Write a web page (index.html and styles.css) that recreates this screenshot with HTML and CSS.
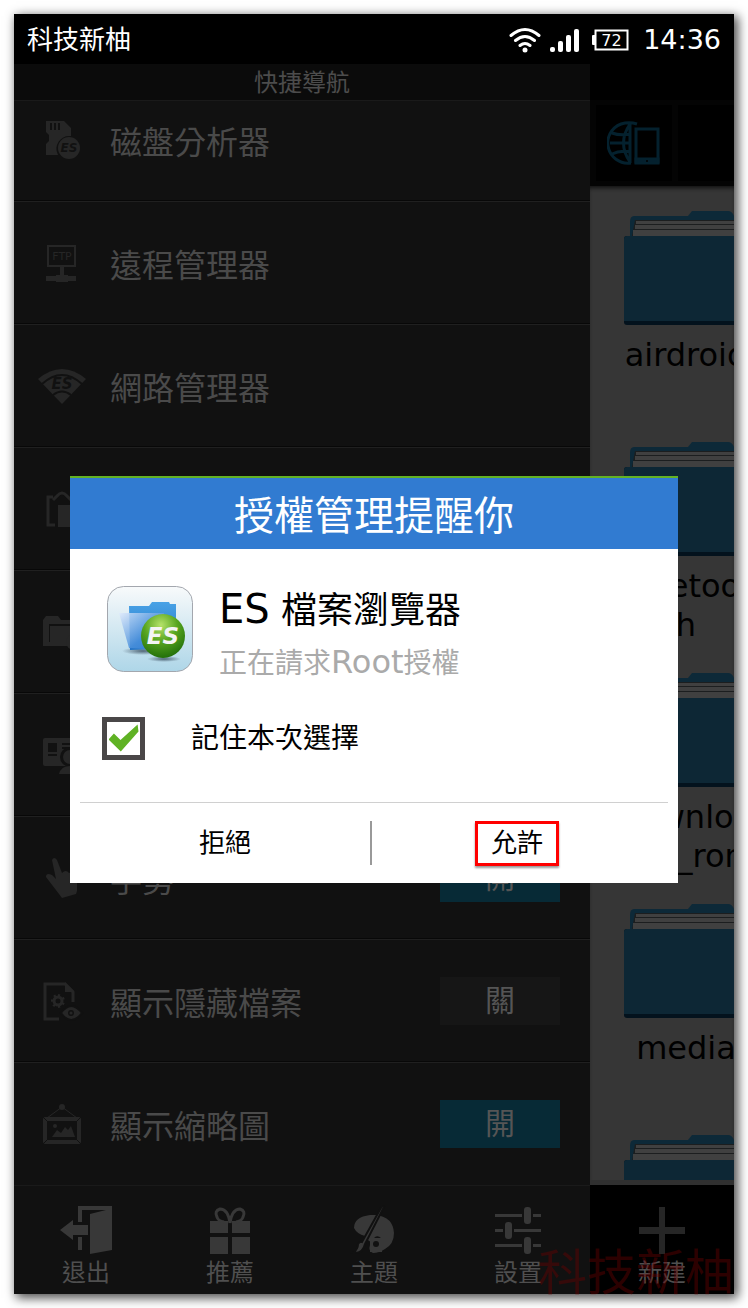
FILE: index.html
```html
<!DOCTYPE html>
<html lang="zh-Hant">
<head>
  <meta charset="UTF-8">
  <meta name="viewport" content="width=device-width, initial-scale=1">
  <title>ES 檔案瀏覽器</title>
  <link rel="stylesheet" href="styles.css">
</head>
<body>

  <!-- folder drawing shared by every grid item -->
  <svg class="defs" width="0" height="0">
    <symbol id="folder" viewBox="0 0 124 126">
      <path fill="#0d2938" d="M6 12q0-6 4-6h54l4-5h36q4 0 6 5h8q4 0 4 6v40H6z"/>
      <path fill="#1c1e1f" d="M11 10h113v16H8z"/>
      <path fill="#404040" d="M12 11h112v3H12zM11 15h113v4H11zM9 20h115v6H9z"/>
      <path fill="#03121d" d="M0 29q0-3 3-3h118q3 0 3 3v83q0 3-3 3H3q-3 0-3-3z"/>
      <path fill="#0d2735" d="M0 29q0-3 3-3h118q3 0 3 3v82H0z"/>
    </symbol>
  </svg>

  <main class="phone">
    <header class="status">
      <span class="carrier">科技新柚</span>
      <svg class="wifi" width="32" height="26" viewBox="0 0 32 26" fill="none" stroke="#fff" stroke-width="3" stroke-linecap="round">
        <path d="M2 8.500Q16-3.500 30 8.500M6.500 13.500Q16 5.500 25.500 13.500M11 18.500Q16 14.500 21 18.500"/>
        <circle cx="16" cy="23" r="2.500" fill="#fff" stroke="none"/>
      </svg>
      <svg class="signal" width="30" height="24" viewBox="0 0 30 24" fill="#fff">
        <rect x="0" y="19" width="5" height="5" rx="2"/>
        <rect x="8" y="13" width="5" height="11" rx="2"/>
        <rect x="16" y="7" width="5" height="17" rx="2"/>
        <rect x="24" y="1" width="5" height="23" rx="2"/>
      </svg>
      <svg class="battery" width="37" height="22" viewBox="0 0 37 22">
        <rect x="3.500" y="1.500" width="32" height="19" fill="none" stroke="#fff" stroke-width="2"/>
        <rect x="0" y="6" width="4" height="10" rx="1" fill="#fff"/>
        <text x="19.500" y="17" fill="#fff" font-size="16" text-anchor="middle">72</text>
      </svg>
      <time class="clock">14:36</time>
    </header>

    <div class="screen">
      <nav class="drawer">
        <h2 class="drawer-title">快捷導航</h2>
        <ul class="menu">
          <li class="row">
            <svg class="row-icon" viewBox="0 0 48 48">
              <path d="M8 5h18l7 7v8a13 13 0 0 0-13 19H8V28l3-3v-6l-3-3z"/>
              <path class="cut" d="M12 7h2v7h-2zM16 7h2v7h-2zM20 7h2v7h-2z"/>
              <circle cx="31" cy="32" r="11"/>
              <text class="cut" x="31" y="36" font-size="12" font-weight="bold" font-style="italic" text-anchor="middle">ES</text>
            </svg>
            <span class="row-label">磁盤分析器</span>
          </li>
          <li class="row">
            <svg class="row-icon" viewBox="0 0 48 48">
              <path fill-rule="evenodd" d="M9 6h29v22H9zM11 8v18h25V8z"/>
              <path d="M22 28h4v9h12v5H8v-5h14z"/>
              <path d="M18 36h12v7H18z"/>
              <text x="24" y="21" font-size="11" text-anchor="middle">FTP</text>
            </svg>
            <span class="row-label">遠程管理器</span>
          </li>
          <li class="row">
            <svg class="row-icon" viewBox="0 0 48 48">
              <path d="M0 17Q24-3 48 17L24 42z"/>
              <path class="cut-line" d="M4 22Q24 4 44 22M15 33q9-7 18 0"/>
              <text class="cut" x="24" y="27" font-size="15" font-weight="bold" font-style="italic" text-anchor="middle">ES</text>
            </svg>
            <span class="row-label">網路管理器</span>
          </li>
          <li class="row">
            <svg class="row-icon" viewBox="0 0 48 48">
              <path class="line" d="M17 40h-7V12h5M33 12h5v8"/>
              <path class="line" d="M15 15l4-4q5-6 10 0l4 4"/>
              <path d="M20 20h12l8 8v14H20z"/>
            </svg>
          </li>
          <li class="row">
            <svg class="row-icon" viewBox="0 0 48 48">
              <path d="M5 12l3-4h12l3 4h18v4H11v18H5z"/>
              <path d="M12 18h28v10l-10 10H5v-4h7z"/>
              <circle cx="36" cy="34" r="8"/>
            </svg>
          </li>
          <li class="row">
            <svg class="row-icon" viewBox="0 0 48 48">
              <path d="M7 7h33q2 0 2 2v24q0 2-2 2H7q-2 0-2-2V9q0-2 2-2z"/>
              <path class="cut" d="M10 12h9v9h-9zM10 23h9v2h-9zM24 12h14v2H24zM24 16h10v2H24z"/>
              <circle class="cut" cx="32" cy="26" r="10"/>
              <circle cx="32" cy="26" r="7"/>
              <path d="M21 43q2-8 11-8t11 8z"/>
            </svg>
          </li>
          <li class="row">
            <svg class="row-icon" viewBox="0 0 48 48">
              <path d="M14 6q2-4 5 0l5 13q4-4 7 0 4-2 6 2l2 3v13l-1 3-14 4-3-4-13-17q0-5 6-2l4 4z"/>
            </svg>
            <span class="row-label">手勢</span>
            <button class="toggle on" type="button">開</button>
          </li>
          <li class="row">
            <svg class="row-icon" viewBox="0 0 48 48">
              <path class="line" d="M21 42H7V7h20l8 8v10"/>
              <path d="M27 5l9 9v1h-9z"/>
              <circle class="line" cx="20" cy="24" r="4"/>
              <path class="line" stroke-dasharray="2 3" d="M20 18.500a5.500 5.500 0 1 1-.1 0"/>
              <path class="halo" d="M23 36q10-14 21 0-11 14-21 0z"/>
              <circle class="cut" cx="33" cy="36" r="3"/>
              <circle cx="33" cy="36" r="1.500"/>
            </svg>
            <span class="row-label">顯示隱藏檔案</span>
            <button class="toggle" type="button">關</button>
          </li>
          <li class="row">
            <svg class="row-icon" viewBox="0 0 48 48">
              <circle cx="24" cy="7" r="3"/>
              <path fill="none" stroke="#262626" stroke-width="1" d="M24 7L9 18M24 7l15 11"/>
              <path fill-rule="evenodd" d="M7 17h34q2 0 2 2v23q0 2-2 2H7q-2 0-2-2V19q0-2 2-2zM9 21v19h30V21z"/>
              <path d="M14 37l5-7 4 3 4-6 3 3 3-4 4 11z"/>
              <circle cx="17" cy="26" r="2"/>
              <path stroke="#111" d="M5 17l4 4M43 17l-4 4M5 44l4-4M43 44l-4-4"/>
            </svg>
            <span class="row-label">顯示縮略圖</span>
            <button class="toggle on" type="button">開</button>
          </li>
        </ul>
        <div class="actions">
          <button class="action" type="button">
            <svg class="action-icon" viewBox="0 0 52 50">
              <path d="M18 1h34v44l-22 4V9l16-4H22v12h-4zM18 32h4v13h-4zM0 25l13-10v5h15v10H13v5z"/>
            </svg>
            退出
          </button>
          <button class="action" type="button">
            <svg class="action-icon" viewBox="0 0 52 50">
              <path d="M6 16h18v12H6zM28 16h18v12H28zM6 32h18v17H6zM28 32h18v17H28z"/>
              <path fill="none" stroke="#383838" stroke-width="3" d="M26 18Q24 4 16 4q-6 2-3 8 1 4 7 5M26 18Q28 4 36 4q6 2 3 8-1 4-7 5"/>
            </svg>
            推薦
          </button>
          <button class="action" type="button">
            <svg class="action-icon" viewBox="0 0 52 50">
              <path d="M28 10q17 2 18 18 0 11-9 16-6 4-12 4-5-2-3-8 2-3 5-2 2 2 5 1 3-2 1-6-3-3-6-1L23 37q-2-1-3-2-1-2-3-4-8-2-11-8Q6 12 22 10z"/>
              <path d="M22 33h12v14H22z"/>
              <circle class="cut" cx="28" cy="39" r="3"/>
              <path stroke="#111" stroke-width="2" d="M34 1l2 1-19 37q-2 10-12 9 5-4 5-9 2-3 4-2z"/>
            </svg>
            主題
          </button>
          <button class="action" type="button">
            <svg class="action-icon" viewBox="0 0 52 50">
              <path d="M3 9h27v3H3zM41 9h8v3h-8zM3 24h8v3H3zM22 24h27v3H22zM3 39h27v3H3zM41 39h8v3h-8z"/>
              <rect x="32" y="2" width="7" height="17" rx="3"/>
              <rect x="13" y="17" width="7" height="17" rx="3"/>
              <rect x="32" y="32" width="7" height="17" rx="3"/>
            </svg>
            設置
          </button>
        </div>
      </nav>

      <section class="files">
        <div class="toolbar">
          <div class="tab">
            <svg width="54" height="44" viewBox="0 0 54 44" fill="none" stroke="#04212e" stroke-width="3">
              <path d="M30 3Q24 1 18 2A20 20 0 0 0 24 42M23 2v40M23 3q-13 19 0 38M5 12q8 3 19 1M3 22h21M5 33q8-4 19-2"/>
              <path d="M29 8h22v33H29z"/>
              <path fill="#04212e" d="M29 38h22v4H29z"/>
              <circle cx="40" cy="40" r="1" fill="#000" stroke="none"/>
            </svg>
          </div>
          <div class="tab"></div>
        </div>
        <ul class="grid">
          <li class="folder"><svg class="folder-icon"><use href="#folder"/></svg><span>airdroid</span></li>
          <li class="folder"><svg class="folder-icon"><use href="#folder"/></svg><span>bluetoot<br>h</span></li>
          <li class="folder"><svg class="folder-icon"><use href="#folder"/></svg><span>downloa<br>ded_rom</span></li>
          <li class="folder"><svg class="folder-icon"><use href="#folder"/></svg><span>media</span></li>
          <li class="folder"><svg class="folder-icon"><use href="#folder"/></svg></li>
        </ul>
        <div class="actions">
          <button class="action" type="button">
            <svg class="action-icon plus" viewBox="0 0 52 50">
              <path d="M23 2h6v20h20v7H29v20h-6V29H3v-7h20z"/>
            </svg>
            新建
          </button>
        </div>
      </section>
    </div>

    <div class="watermark">科技新柚</div>

    <div class="overlay">
      <form class="dialog" role="dialog" aria-labelledby="dialog-title">
        <h1 class="dialog-title" id="dialog-title">授權管理提醒你</h1>
        <div class="app">
          <svg class="app-icon" width="86" height="86" viewBox="0 0 86 86">
            <defs>
              <linearGradient id="tile" x2="0" y2="1"><stop stop-color="#f8fafb"/><stop offset="1" stop-color="#aed6e8"/></linearGradient>
              <linearGradient id="back" x2="0" y2="1"><stop stop-color="#48a2e6"/><stop offset="1" stop-color="#2272c4"/></linearGradient>
              <linearGradient id="front" x2="1" y2="1"><stop stop-color="#dfeafc"/><stop offset=".6" stop-color="#4a90dc"/><stop offset="1" stop-color="#2f7fd0"/></linearGradient>
              <radialGradient id="ball" cx=".45" cy=".25" r=".75"><stop stop-color="#b5e26a"/><stop offset=".5" stop-color="#57a51f"/><stop offset="1" stop-color="#23700a"/></radialGradient>
              <radialGradient id="shade"><stop stop-color="#234" stop-opacity=".7"/><stop offset="1" stop-color="#234" stop-opacity="0"/></radialGradient>
            </defs>
            <rect x=".5" y=".5" width="85" height="85" rx="16" fill="url(#tile)" stroke="#a3a7ae"/>
            <ellipse cx="36" cy="65" rx="21" ry="4" fill="url(#shade)"/>
            <ellipse cx="57" cy="73" rx="17" ry="3" fill="url(#shade)"/>
            <path fill="url(#back)" d="M22 20h20l3-4h17l1 2h6v44l-46 2z"/>
            <path fill="url(#front)" fill-opacity=".85" d="M12 27h45l-5 37-30-2z"/>
            <circle cx="56" cy="50" r="22" fill="url(#ball)"/>
            <text x="56" y="58" fill="#f4f4f4" font-size="23" font-weight="bold" font-style="italic" text-anchor="middle">ES</text>
          </svg>
          <div class="app-text">
            <p class="app-name"><span class="latin">ES</span> 檔案瀏覽器</p>
            <p class="app-note">正在請求<span class="latin">Root</span>授權</p>
          </div>
        </div>
        <div class="remember">
          <input type="checkbox" id="remember" checked>
          <label for="remember">記住本次選擇</label>
        </div>
        <div class="buttons">
          <button class="choice" type="button"><span>拒絕</span></button>
          <button class="choice allow" type="button"><span>允許</span></button>
        </div>
      </form>
    </div>
  </main>

</body>
</html>
```
FILE: styles.css
```css
* {
  box-sizing: border-box;
}
body {
  margin: 0;
  padding: 14px;
  background: #fff;
  font-family: "DejaVu Sans", "Noto Sans CJK TC", sans-serif;
}
h1, h2, p, ul {
  margin: 0;
  padding: 0;
  font-weight: normal;
  list-style: none;
}
button {
  padding: 0;
  border: none;
  background: none;
  font-family: inherit;
  cursor: pointer;
}
.defs {
  position: absolute;
}
.phone {
  position: relative;
  display: flex;
  flex-direction: column;
  height: calc(100vh - 28px);
  background: #000;
  box-shadow: 3px 3px 10px 1px rgba(0, 0, 0, 0.7);
}

/* status bar */
.status {
  display: flex;
  align-items: center;
  height: 50px;
  padding: 2px 13px 0;
  color: #fff;
  font-size: 26px;
}
.carrier {
  margin-right: auto;
  line-height: 50px;
}
.signal {
  margin-left: 9px;
}
.battery {
  margin: 0 14px 0 12px;
}
.clock {
  font-size: 27px;
  line-height: 50px;
}

.screen {
  display: flex;
  flex: 1;
  min-height: 0;
}

/* drawer */
.drawer {
  display: flex;
  flex-direction: column;
  width: 80%;
  background: #111;
}
.drawer-title {
  height: 36px;
  background: #0b0b0b;
  color: #4c4c4c;
  font-size: 24px;
  line-height: 38px;
  text-align: center;
}
.menu {
  display: flex;
  flex: 1;
  flex-direction: column;
  justify-content: flex-end;
  min-height: 0;
  overflow: hidden;
  border-top: 1px solid #1a1a1a;
}
.row {
  display: flex;
  flex-shrink: 0;
  align-items: center;
  gap: 24px;
  height: 123px;
  padding: 0 30px 0 24px;
  border-top: 1px solid #202020;
  box-shadow: 0 -1px #080808;
}
.row-icon {
  width: 48px;
  height: 48px;
  fill: #262626;
}
.row-icon .cut,
.action-icon .cut {
  fill: #111;
}
.row-icon .cut-line {
  fill: none;
  stroke: #111;
  stroke-width: 2;
}
.row-icon .line {
  fill: none;
  stroke: #262626;
  stroke-width: 3;
}
.row-icon .halo {
  stroke: #111;
  stroke-width: 2;
}
.row-label {
  color: #4a4a4a;
  font-size: 32px;
}
.toggle {
  width: 120px;
  height: 48px;
  margin-left: auto;
  background: #161616;
  color: #555;
  font-size: 30px;
  line-height: 48px;
}
.toggle.on {
  background: #072a36;
}

/* bottom bars */
.actions {
  display: flex;
  height: 109px;
  border-top: 1px solid #1a1a1a;
}
.action {
  display: flex;
  flex: 1;
  flex-direction: column;
  align-items: center;
  padding-top: 19px;
  color: #4f4f4f;
  font-size: 24px;
  line-height: 36px;
}
.action-icon {
  width: 52px;
  height: 50px;
  fill: #383838;
}
.action-icon.plus {
  fill: #262626;
}

/* file list */
.files {
  display: flex;
  flex-direction: column;
  width: 20%;
  padding-top: 36px;
  overflow: hidden;
}
.toolbar {
  display: flex;
  gap: 6px;
  height: 86px;
  padding: 5px 0 5px 6px;
  background: #040404;
}
.tab {
  display: flex;
  flex-shrink: 0;
  align-items: center;
  justify-content: center;
  width: 76px;
  background: #000;
}
.grid {
  flex: 1;
  min-height: 0;
  padding-top: 24px;
  overflow: hidden;
  background: #363636;
  border-bottom: 5px solid #303030;
  box-shadow: inset 0 4px 4px -2px #111;
}
.folder {
  display: flex;
  flex-direction: column;
  align-items: center;
  width: 192px;
  height: 231px;
  color: #000;
  font-size: 32px;
  line-height: 39px;
  text-align: center;
}
.folder-icon {
  flex-shrink: 0;
  width: 124px;
  height: 126px;
}
.files .actions {
  border-color: #000;
}

.watermark {
  position: absolute;
  right: 0;
  bottom: 0;
  color: rgba(110, 0, 0, 0.4);
  font-family: "Noto Sans CJK TC", sans-serif;
  font-size: 49px;
  line-height: 50px;
}

/* permission dialog */
.overlay {
  position: absolute;
  inset: 50px 0 0;
  display: flex;
  align-items: center;
  padding: 0 56px;
}
.dialog {
  flex: 1;
  background: #fff;
  border-top: 2px solid #63b224;
}
.dialog-title {
  height: 71px;
  padding-top: 5px;
  background: #317bd1;
  color: #fff;
  font-size: 40px;
  line-height: 66px;
  text-align: center;
}
.app {
  display: flex;
  gap: 26px;
  padding: 37px 37px 0;
}
.app-name {
  color: #000;
  font-size: 36px;
  line-height: 46px;
}
.app-name .latin {
  font-size: 40px;
}
.app-note {
  margin-top: 8px;
  color: #aaa;
  font-size: 28px;
  line-height: 40px;
}
.app-note .latin {
  font-size: 32px;
}
.remember {
  display: flex;
  align-items: center;
  gap: 46px;
  margin: 33px 32px 42px;
  font-size: 28px;
  line-height: 43px;
}
.remember input {
  display: grid;
  place-items: center;
  width: 43px;
  height: 43px;
  margin: 0;
  appearance: none;
  background: #fff;
  border: 5px solid #4a4748;
}
.remember input:checked::before {
  content: "";
  width: 30px;
  height: 28px;
  background: #5fb224;
  clip-path: polygon(0 55%, 18% 34%, 40% 57%, 97% 2%, 100% 27%, 41% 98%);
}
.buttons {
  display: flex;
  align-items: center;
  height: 81px;
  margin: 0 10px;
  border-top: 1px solid #d0d0d0;
}
.choice {
  flex: 1;
  height: 44px;
  color: #000;
  font-size: 26px;
  line-height: 39px;
}
.choice span {
  display: inline-block;
  padding: 0 13px;
  border: 3px solid transparent;
}
.choice + .choice {
  padding-right: 6px;
  border-left: 2px solid #999;
}
.allow span {
  border-color: #f00;
  box-shadow: 0 2px 2px rgba(0, 0, 0, 0.4);
}
```
